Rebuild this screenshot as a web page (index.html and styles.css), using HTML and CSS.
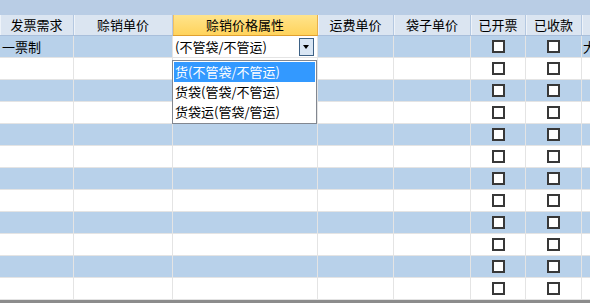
FILE: index.html
```html
<!DOCTYPE html>
<html>
<head>
<meta charset="utf-8">
<link rel="stylesheet" href="styles.css">
</head>
<body>
<div class="sheet">
  <div class="band"></div>
  <div class="row head">
    <div class="c c1">发票需求</div>
    <div class="c c2">赊销单价</div>
    <div class="c c3 sel">赊销价格属性</div>
    <div class="c c4">运费单价</div>
    <div class="c c5">袋子单价</div>
    <div class="c c6">已开票</div>
    <div class="c c7">已收款</div>
    <div class="c c8"></div>
  </div>
  <div class="row alt">
    <div class="c c1 txt">一票制</div>
    <div class="c c2"></div>
    <div class="c c3"><div class="combo"><span>(不管袋/不管运)</span><span class="btn"></span></div></div>
    <div class="c c4"></div>
    <div class="c c5"></div>
    <div class="c c6"><span class="cb"></span></div>
    <div class="c c7"><span class="cb"></span></div>
    <div class="c c8 txt">大</div>
  </div>
  <div class="row"><div class="c c1"></div><div class="c c2"></div><div class="c c3"></div><div class="c c4"></div><div class="c c5"></div><div class="c c6"><span class="cb"></span></div><div class="c c7"><span class="cb"></span></div><div class="c c8"></div></div>
  <div class="row alt"><div class="c c1"></div><div class="c c2"></div><div class="c c3"></div><div class="c c4"></div><div class="c c5"></div><div class="c c6"><span class="cb"></span></div><div class="c c7"><span class="cb"></span></div><div class="c c8"></div></div>
  <div class="row"><div class="c c1"></div><div class="c c2"></div><div class="c c3"></div><div class="c c4"></div><div class="c c5"></div><div class="c c6"><span class="cb"></span></div><div class="c c7"><span class="cb"></span></div><div class="c c8"></div></div>
  <div class="row alt"><div class="c c1"></div><div class="c c2"></div><div class="c c3"></div><div class="c c4"></div><div class="c c5"></div><div class="c c6"><span class="cb"></span></div><div class="c c7"><span class="cb"></span></div><div class="c c8"></div></div>
  <div class="row"><div class="c c1"></div><div class="c c2"></div><div class="c c3"></div><div class="c c4"></div><div class="c c5"></div><div class="c c6"><span class="cb"></span></div><div class="c c7"><span class="cb"></span></div><div class="c c8"></div></div>
  <div class="row alt"><div class="c c1"></div><div class="c c2"></div><div class="c c3"></div><div class="c c4"></div><div class="c c5"></div><div class="c c6"><span class="cb"></span></div><div class="c c7"><span class="cb"></span></div><div class="c c8"></div></div>
  <div class="row"><div class="c c1"></div><div class="c c2"></div><div class="c c3"></div><div class="c c4"></div><div class="c c5"></div><div class="c c6"><span class="cb"></span></div><div class="c c7"><span class="cb"></span></div><div class="c c8"></div></div>
  <div class="row alt"><div class="c c1"></div><div class="c c2"></div><div class="c c3"></div><div class="c c4"></div><div class="c c5"></div><div class="c c6"><span class="cb"></span></div><div class="c c7"><span class="cb"></span></div><div class="c c8"></div></div>
  <div class="row"><div class="c c1"></div><div class="c c2"></div><div class="c c3"></div><div class="c c4"></div><div class="c c5"></div><div class="c c6"><span class="cb"></span></div><div class="c c7"><span class="cb"></span></div><div class="c c8"></div></div>
  <div class="row alt"><div class="c c1"></div><div class="c c2"></div><div class="c c3"></div><div class="c c4"></div><div class="c c5"></div><div class="c c6"><span class="cb"></span></div><div class="c c7"><span class="cb"></span></div><div class="c c8"></div></div>
  <div class="row"><div class="c c1"></div><div class="c c2"></div><div class="c c3"></div><div class="c c4"></div><div class="c c5"></div><div class="c c6"><span class="cb"></span></div><div class="c c7"><span class="cb"></span></div><div class="c c8"></div></div>
  <div class="hscroll"></div>

  <ul class="droplist">
    <li class="on">货(不管袋/不管运)</li>
    <li>货袋(管袋/不管运)</li>
    <li>货袋运(管袋/管运)</li>
  </ul>
</div>
</body>
</html>
```

FILE: styles.css
```css
html, body {
  margin: 0;
  padding: 0;
  background: #fff;
  overflow: hidden;
}
body {
  font-family: "Noto Sans CJK SC", "Noto Sans", sans-serif;
  font-size: 13px;
  color: #000;
}
.sheet {
  position: relative;
  width: 720px;
}
.band {
  height: 15px;
  background: #b9cde5;
}
.row {
  display: flex;
  height: 22px;
  box-sizing: border-box;
  border-bottom: 1px solid #e4e4e4;
  background: #fff;
}
.row.alt {
  background: #b8d1ea;
}
.c {
  flex: none;
  box-sizing: border-box;
  height: 100%;
  border-right: 1px solid #e4e4e4;
  overflow: hidden;
  white-space: nowrap;
  line-height: 21px;
}
.c1 { width: 74px; }
.c2 { width: 99px; }
.c3 { width: 145px; }
.c4 { width: 76px; }
.c5 { width: 77px; }
.c6 { width: 55px; }
.c7 { width: 56px; }
.c8 { width: 130px; }

.head {
  height: 21px;
  background: #dbe5f1;
  border-bottom: 1px solid #a9bfdb;
}
.head .c {
  text-align: center;
  line-height: 20px;
  border-right: 1px solid #b4c8e1;
  box-shadow: inset 1px 0 0 #eef3f9;
}
.head .c.sel {
  background: linear-gradient(#ffe48c, #ffd35c);
  border-right: 1px solid #e8b04a;
  box-shadow: inset 1px 0 0 #f2c060;
  margin-bottom: -1px;
  height: 21px;
  border-bottom: 1px solid #e0a030;
}
.txt {
  padding-left: 2px;
}
.c8.txt {
  padding-left: 1px;
}
.combo {
  display: flex;
  align-items: center;
  height: 100%;
  background: #fff;
  padding-left: 2px;
}
.btn {
  position: relative;
  width: 15px;
  height: 18px;
  box-sizing: border-box;
  margin-left: auto;
  margin-right: 3px;
  border: 1px solid #3d6185;
  background: #d9e6f4;
}
.btn::after {
  content: "";
  position: absolute;
  left: 3px;
  top: 6px;
  border-left: 3.5px solid transparent;
  border-right: 3.5px solid transparent;
  border-top: 4px solid #000;
}
.cb {
  display: block;
  width: 13px;
  height: 13px;
  box-sizing: border-box;
  border: 2px solid #383838;
  background: #fff;
  margin: 4px auto 0;
}
.hscroll {
  height: 10px;
  background: #8c8c8c;
}
.droplist {
  position: absolute;
  left: 172px;
  top: 60px;
  width: 145px;
  box-sizing: border-box;
  margin: 0;
  padding: 1px;
  list-style: none;
  background: #fff;
  border: 1px solid #828790;
}
.droplist li {
  height: 20px;
  line-height: 19px;
  padding-left: 1px;
  white-space: nowrap;
}
.droplist li.on {
  background: #3399ff;
  color: #fff;
}
```
